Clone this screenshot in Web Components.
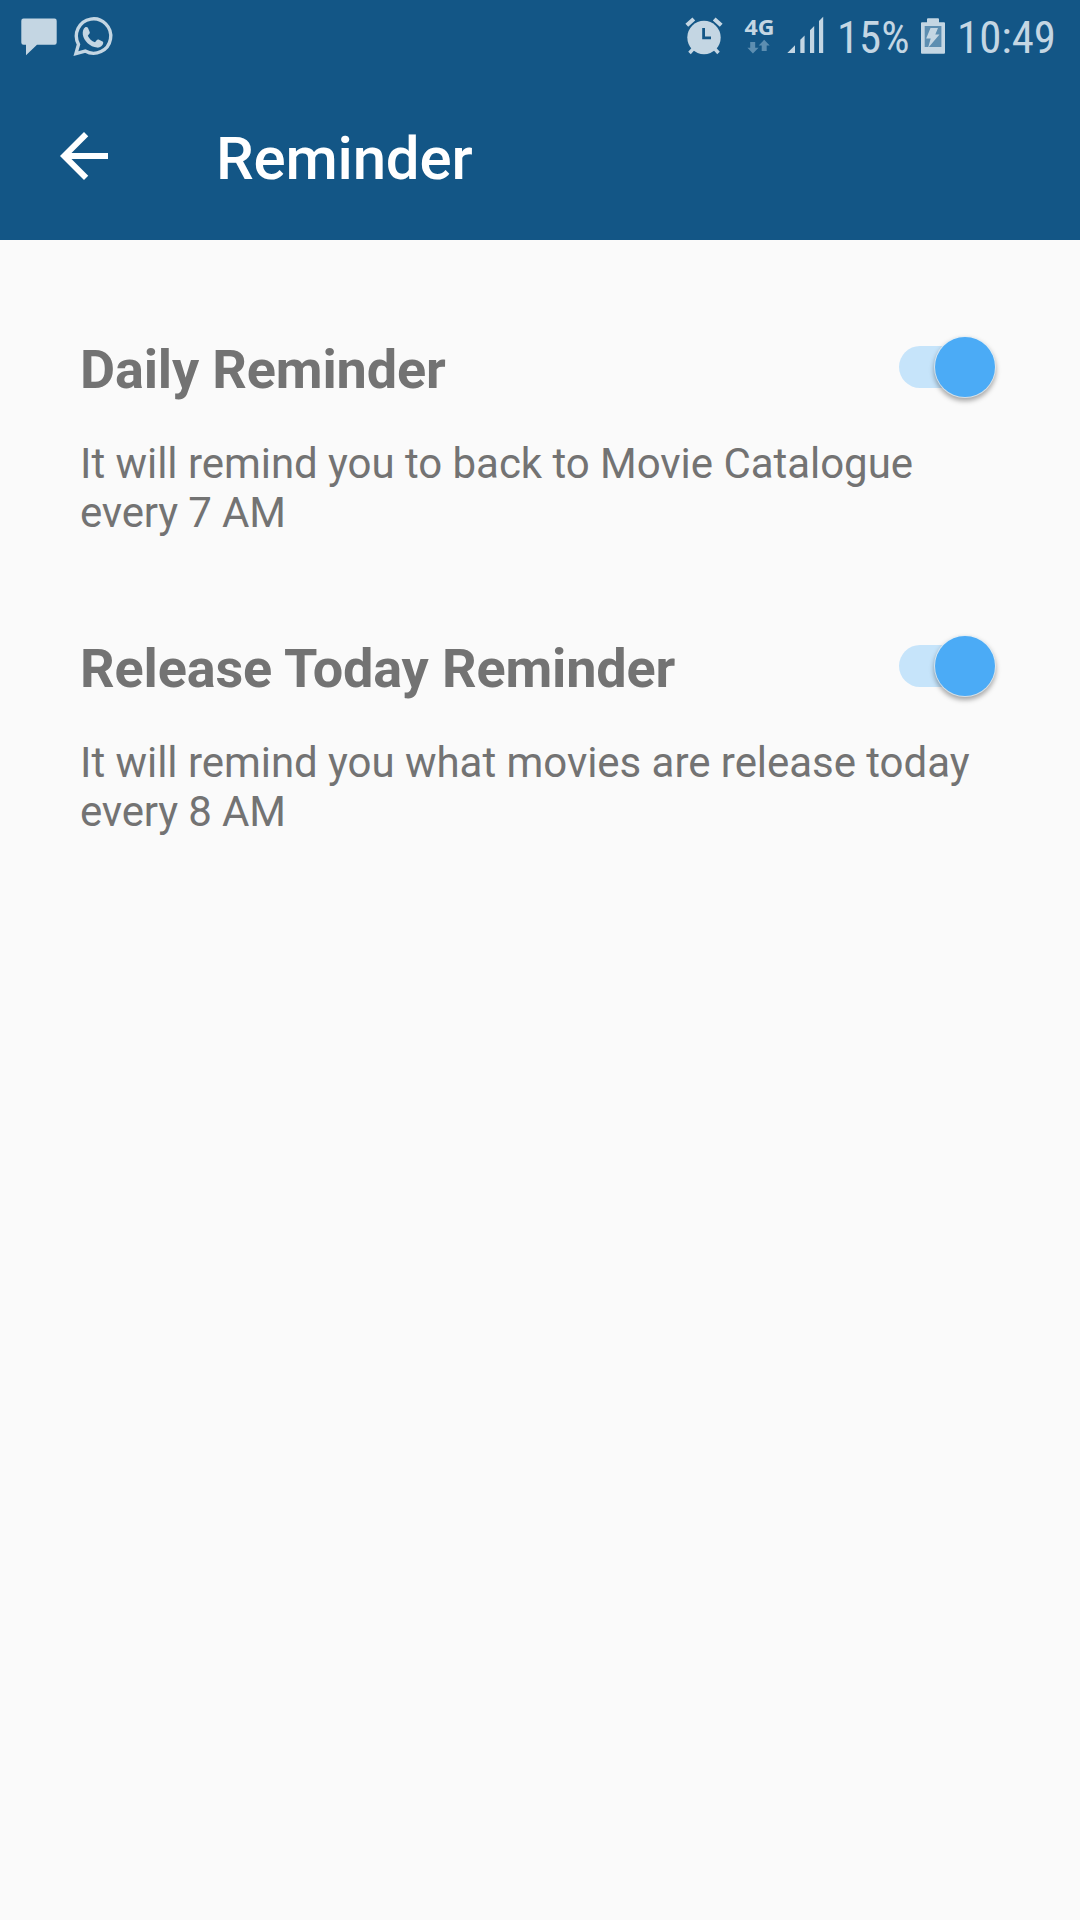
<!DOCTYPE html>
<html lang="en">
<head>
<meta charset="utf-8">
<title>Reminder</title>
<style>
html,body{margin:0;background:#fafafa;font-family:Roboto,"Noto Sans",sans-serif}
</style>
</head>
<body>
<reminder-screen></reminder-screen>
<script>
const define = (name, markup) => {
  const t = document.createElement('template');
  t.innerHTML = markup;
  customElements.define(name, class extends HTMLElement {
    constructor() {
      super();
      this.attachShadow({mode: 'open'}).appendChild(t.content.cloneNode(true));
    }
  });
};

define('status-bar', `
<style>
:host{display:flex;justify-content:space-between;height:72px;color:#c4d6e3}
.group{display:flex}
svg{display:block;height:72px;fill:currentColor;flex:none}
text{font-family:"Roboto Condensed",Roboto,sans-serif;font-size:45px}
.net{font:700 22px "Open Sans","Noto Sans",sans-serif}
</style>
<div class="group">
  <svg width="64" viewBox="0 0 64 72"><path d="M23.5 18.5H54.5a2.2 2.2 0 0 1 2.2 2.2V42.6a2.2 2.2 0 0 1-2.2 2.2H37L26 55.2V44.8H23.5a2.2 2.2 0 0 1-2.2-2.2V20.7a2.2 2.2 0 0 1 2.2-2.2z"/></svg>
  <svg width="60" viewBox="64 0 60 72">
    <path d="M75.9 53.6l2.6-9.2A17.2 17.2 0 1 1 85.2 51.1z" fill="none" stroke="currentColor" stroke-width="3.4"/>
    <path d="M85.2 27.2c.9-.4 2.2-.3 2.7.6l1.8 4.2c.3.8-.1 1.5-.6 2.1l-1.3 1.6c1.4 3 3.8 5.2 7.2 6.6l1.9-2.3c.5-.6 1-.7 1.700-.4l3.900 1.900c.7.4.8.8.7 1.500-.3 2.600-3.200 4.900-6.100 4.600-7.200-1-13.200-6.600-14.300-13.200-.3-3 .4-5.800 2.400-7.200z"/>
  </svg>
</div>
<div class="group">
  <svg width="62" viewBox="674 0 62 72">
    <circle cx="704" cy="37.5" r="16.7"/>
    <path d="M686.8 25.200l7-6.200M721.200 25.200l-7-6.200" stroke="currentColor" stroke-width="4.200"/>
    <path d="M693.500 48.500l-4 4.500M714.500 48.500l4 4.500" stroke="currentColor" stroke-width="3.400"/>
    <path d="M703.600 28v9.800h7.400" fill="none" stroke="#135686" stroke-width="2.800"/>
  </svg>
  <svg width="46" viewBox="736 0 46 72">
    <text class="net" x="744.5" y="35" textLength="30" lengthAdjust="spacingAndGlyphs">4G</text>
    <path fill="#5d8eb1" d="M750.200 42h5v5.800h3.400L752.900 53.500l-5.500-5.700h2.800zM761.700 51h5v-5.600h3L764.200 39.700l-5.500 5.700h3z"/>
  </svg>
  <svg width="50" viewBox="782 0 50 72"><path d="M787.300 53L795 45.300V53zM800.300 53V39.800l4.300-4.300V53zM810 53V30.300l4.200-4.200V53zM819 53V21l4.200-4.200V53z"/></svg>
  <svg width="83" viewBox="832 0 83 72"><text x="837" y="53.300" textLength="72.500" lengthAdjust="spacingAndGlyphs">15%</text></svg>
  <svg width="37" viewBox="915 0 37 72">
    <path d="M927 22.200V19.300a1 1 0 0 1 1-1h10a1 1 0 0 1 1 1v2.900h5a1 1 0 0 1 1 1V52.800a1 1 0 0 1-1 1h-22a1 1 0 0 1-1-1V23.200a1 1 0 0 1 1-1z"/>
    <path fill="#5d8eb1" d="M924.700 26h16.700v21h-16.700z"/>
    <path d="M930.500 28h7.500l-2.700 6.500h4.200L928 48l2.700-9.600h-4.500z"/>
  </svg>
  <svg width="128" viewBox="952 0 128 72"><text x="957" y="53.300" textLength="99" lengthAdjust="spacingAndGlyphs">10:49</text></svg>
</div>`);

define('app-toolbar', `
<style>
:host{display:flex;align-items:center;height:168px;box-sizing:border-box;padding-left:48px;gap:96px;color:#fff}
svg{display:block;width:72px;height:72px;fill:currentColor}
h1{margin:0;font-size:60px;line-height:70px;font-weight:500;padding-top:6px;letter-spacing:-.2px}
</style>
<svg viewBox="0 0 24 24"><path d="M20 11H7.830l5.590-5.590L12 4l-8 8 8 8 1.410-1.410L7.830 13H20v-2z"/></svg>
<h1><slot></slot></h1>`);

define('toggle-switch', `
<style>
:host{display:flex;align-items:center;width:96px;height:62px;flex:none}
.track{display:flex;align-items:center;justify-content:flex-end;width:92px;height:42px;border-radius:21px;background:#c6e4fa}
.thumb{width:60px;height:60px;border-radius:50%;background:#4babf6;margin-right:-3.500px;flex:none;box-shadow:0 0 0 1px rgba(225,240,250,.75),0 3px 5px 1px rgba(0,0,0,.34)}
</style>
<div class="track"><div class="thumb"></div></div>`);

define('reminder-item', `
<style>
:host{display:block;color:#737373}
.head{display:flex;justify-content:space-between;align-items:flex-start;height:64px}
h2{margin:0;font-size:54px;line-height:64px;font-weight:700;letter-spacing:-.14px}
toggle-switch{margin-top:-2.500px}
p{margin:37px 0 0;font-size:42px;line-height:49px;letter-spacing:-.04px}
</style>
<div class="head"><h2><slot name="title"></slot></h2><toggle-switch></toggle-switch></div>
<p><slot></slot></p>`);

define('reminder-screen', `
<style>
:host{display:block;height:1920px;overflow:hidden;background:#fafafa}
header{background:#135686}
main{display:flex;flex-direction:column;gap:100px;padding:98px 85px 0 80px}
.time{letter-spacing:-.17px}
</style>
<header><status-bar></status-bar><app-toolbar>Reminder</app-toolbar></header>
<main>
  <reminder-item><span slot="title">Daily Reminder</span>It will remind you to back to Movie Catalogue<br><span class="time">every 7 AM</span></reminder-item>
  <reminder-item><span slot="title">Release Today Reminder</span>It will remind you what movies are release today<br><span class="time">every 8 AM</span></reminder-item>
</main>`);
</script>
</body>
</html>
